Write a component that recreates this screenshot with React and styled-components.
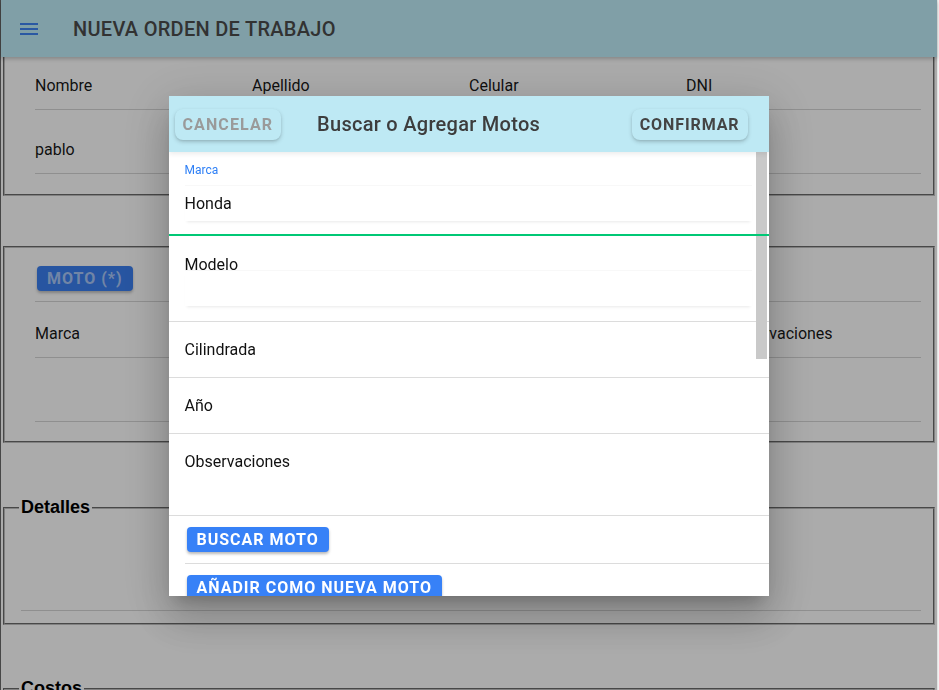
import React from 'react'
import styled, { createGlobalStyle } from 'styled-components'

const GlobalStyle = createGlobalStyle`
  html, body { margin: 0; padding: 0; background: #ffffff; overflow: hidden; }
  body { font-family: Roboto, 'Liberation Sans', sans-serif; }
  * { box-sizing: border-box; }
`

const Screen = styled.div`
  display: flex;
  width: 939px;
  height: 690px;
  overflow: hidden;
`
const Main = styled.div`
  flex: 1;
  display: flex;
  flex-direction: column;
  border-left: 1px solid #6a6a6a;
  background: #ffffff;
`
const Edge = styled.div`
  width: 2px;
  background: #f2f2f2;
  border-left: 1px solid #e2e2e2;
`
const TopBar = styled.header`
  height: 57px;
  flex-shrink: 0;
  display: flex;
  align-items: center;
  padding-left: 16px;
  background: #bfeefa;
  box-shadow: 0 2px 4px rgba(0, 0, 0, 0.22);
  position: relative;
  z-index: 1;
`
const Heading = styled.h1`
  margin: 0 0 0 32px;
  font-size: 20px;
  font-weight: 500;
  color: #4b4b4b;
  letter-spacing: 0.28px;
`
const Fieldset = styled.fieldset`
  margin: ${p => p.$mt || 0}px 2px 0;
  padding: 0 12px ${p => p.$pb || 0}px ${p => p.$pl || 30}px;
  border: 2px groove #c0c0c0;
  ${p => p.$open && 'border-top: none;'}
  min-width: 0;
`
const Legend = styled.legend`
  padding: 0 2px;
  font-family: 'Liberation Sans', Arial, sans-serif;
  font-size: 18px;
  font-weight: 700;
  color: #000;
`
const Row = styled.div`
  display: grid;
  grid-template-columns: repeat(${p => p.$cols}, ${p => p.$col}px);
  height: ${p => p.$h}px;
  padding-top: ${p => p.$pt || 0}px;
  border-bottom: 1px solid #d6d6d6;
  font-size: 16px;
  line-height: 19px;
  color: rgba(0, 0, 0, 0.92);
  margin-left: ${p => p.$ml || 0}px;
`
const PageButton = styled.button`
  justify-self: start;
  height: 25px;
  margin-left: 2px;
  padding: 0 10px;
  border: none;
  border-radius: 4px;
  background: #3b7ff0;
  color: rgba(255, 255, 255, 0.58);
  font-family: Roboto, sans-serif;
  font-size: 16px;
  font-weight: 700;
  letter-spacing: 1px;
  box-shadow: 0 2px 3px rgba(0, 0, 0, 0.25);
`

const Overlay = styled.div`
  position: fixed;
  top: 0;
  left: 0;
  bottom: 0;
  right: 2px;
  padding-top: 2px;
  background: rgba(0, 0, 0, 0.33);
  display: flex;
  align-items: center;
  justify-content: center;
  z-index: 10;
`
const Dialog = styled.div`
  width: 600px;
  height: 500px;
  background: #ffffff;
  display: flex;
  flex-direction: column;
  overflow: hidden;
  box-shadow: 0 11px 15px -7px rgba(0, 0, 0, 0.2), 0 24px 38px 3px rgba(0, 0, 0, 0.14),
    0 9px 46px 8px rgba(0, 0, 0, 0.12);
`
const DialogBar = styled.div`
  height: 56px;
  flex-shrink: 0;
  display: flex;
  align-items: center;
  padding: 0 21px 0 6px;
  background: #bee9f4;
  box-shadow: 0 2px 5px rgba(0, 0, 0, 0.08);
  position: relative;
  z-index: 2;
`
const DialogTitle = styled.h2`
  margin: 0 auto 0 36px;
  font-size: 20px;
  font-weight: 500;
  color: #3d3d3d;
  letter-spacing: 0.28px;
`
const BarButton = styled.button`
  height: 31px;
  padding: 0 8px;
  border: none;
  border-radius: 8px;
  background: #bee9f4;
  color: ${p => (p.$muted ? '#9a9a9a' : '#444444')};
  font-family: Roboto, sans-serif;
  font-size: 16px;
  font-weight: 700;
  letter-spacing: ${p => (p.$muted ? 1.1 : 0.9)}px;
  box-shadow: 0 2px 4px rgba(0, 0, 0, 0.18), 0 1px 2px rgba(0, 0, 0, 0.08);
`
const Content = styled.div`
  flex: 1;
  position: relative;
  overflow: hidden;
`
const Thumb = styled.div`
  position: absolute;
  top: 0;
  right: 2px;
  width: 11px;
  height: 207px;
  background: #c9c9c9;
  z-index: 1;
`
const Field = styled.div`
  padding: ${p => p.$pt}px 17px ${p => p.$pb}px 16px;
  border-bottom: ${p => (p.$active ? '2px solid #00c875' : '1px solid #dcdcdc')};
  position: relative;
  z-index: ${p => (p.$active ? 2 : 0)};
`
const FieldLabel = styled.div`
  height: ${p => (p.$small ? 14 : 12)}px;
  margin-bottom: ${p => (p.$small ? 8 : 0)}px;
  font-size: ${p => (p.$small ? 12 : 16)}px;
  line-height: 14px;
  color: ${p => (p.$small ? '#2f80f6' : '#111')};
`
const Input = styled.div`
  height: 36px;
  display: flex;
  align-items: center;
  font-size: 16px;
  color: #111;
  border-top: 1px solid #f8f8f8;
  box-shadow: 0 3px 3px -2px rgba(0, 0, 0, 0.09);
`
const Item = styled.div`
  height: ${p => p.$h}px;
  padding: ${p => p.$pt}px 16px 0;
  font-size: 16px;
  line-height: 19px;
  color: #111;
  border-bottom: 1px solid #dcdcdc;
`
const Actions = styled.div`
  margin-left: 16px;
  padding: 11px 0 11px 2px;
  border-bottom: 1px solid #dcdcdc;
`
const Action = styled.button`
  height: 25px;
  padding: 0 10px;
  border: none;
  border-radius: 4px;
  background: #3781f7;
  color: #ffffff;
  font-family: Roboto, sans-serif;
  font-size: 16px;
  font-weight: 700;
  letter-spacing: 1px;
  box-shadow: 0 2px 3px rgba(0, 0, 0, 0.28);
`

function MenuIcon() {
  return (
    <svg width="24" height="24" viewBox="0 0 24 24" fill="#3f83f4">
      <path d="M3 18h18v-2H3v2zm0-5h18v-2H3v2zm0-7v2h18V6H3z" />
    </svg>
  )
}

export default function App() {
  const cliente = ['Nombre', 'Apellido', 'Celular', 'DNI']
  const moto = ['Marca', 'Modelo', 'Cilindrada', 'Año', 'Observaciones']
  return (
    <>
      <GlobalStyle />
      <Screen>
        <Main>
          <TopBar>
            <MenuIcon />
            <Heading>NUEVA ORDEN DE TRABAJO</Heading>
          </TopBar>
          <Fieldset $open $pb={20}>
            <Row $cols={4} $col={217} $h={53} $pt={19}>
              {cliente.map(x => <div key={x}>{x}</div>)}
            </Row>
            <Row $cols={4} $col={217} $h={64} $pt={30}>
              <div>pablo</div>
            </Row>
          </Fieldset>
          <Fieldset $mt={50} $pb={19}>
            <Row $cols={1} $col={300} $h={54} $pt={18}>
              <PageButton>MOTO (*)</PageButton>
            </Row>
            <Row $cols={5} $col={173} $h={56} $pt={22}>
              {moto.map(x => <div key={x}>{x}</div>)}
            </Row>
            <Row $cols={5} $col={173} $h={64} />
          </Fieldset>
          <Fieldset $mt={54} $pl={14} $pb={12}>
            <Legend>Detalles</Legend>
            <Row $cols={1} $col={300} $h={93} $ml={2} />
          </Fieldset>
          <Fieldset $mt={53} $pl={14} $pb={12}>
            <Legend>Costos</Legend>
            <Row $cols={1} $col={300} $h={93} $ml={2} />
          </Fieldset>
        </Main>
        <Edge />
      </Screen>
      <Overlay>
        <Dialog>
          <DialogBar>
            <BarButton $muted>CANCELAR</BarButton>
            <DialogTitle>Buscar o Agregar Motos</DialogTitle>
            <BarButton>CONFIRMAR</BarButton>
          </DialogBar>
          <Content>
            <Thumb />
            <Field $active $pt={11} $pb={13}>
              <FieldLabel $small>Marca</FieldLabel>
              <Input>Honda</Input>
            </Field>
            <Field $pt={22} $pb={15}>
              <FieldLabel>Modelo</FieldLabel>
              <Input />
            </Field>
            <Item $h={56} $pt={18}>Cilindrada</Item>
            <Item $h={56} $pt={18}>Año</Item>
            <Item $h={82} $pt={18}>Observaciones</Item>
            <Actions>
              <Action>BUSCAR MOTO</Action>
            </Actions>
            <Actions>
              <Action>AÑADIR COMO NUEVA MOTO</Action>
            </Actions>
          </Content>
        </Dialog>
      </Overlay>
    </>
  )
}
